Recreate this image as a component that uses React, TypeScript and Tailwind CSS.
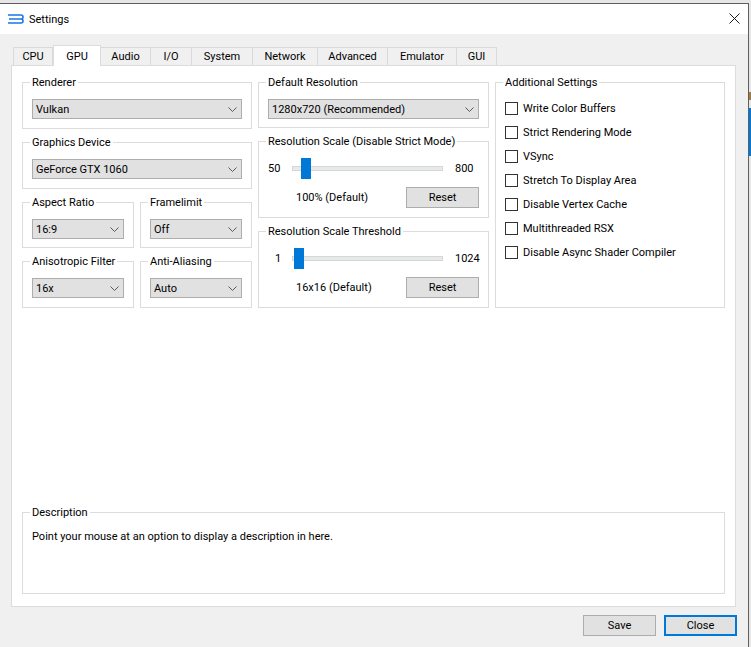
function Group({ title, className, children }: { title: string; className: string; children?: React.ReactNode }) {
  return (
    <div className={`relative border border-[#dcdcdc] ${className}`}>
      <span className="absolute left-[7px] top-[-8px] bg-white px-[2px] leading-[16px] text-black">{title}</span>
      {children}
    </div>
  );
}

function Combo({ value }: { value: string }) {
  return (
    <div className="flex h-[20px] items-center justify-between border border-[#adadad] bg-[#e1e1e1] pl-[3px] pr-[4px] text-black">
      <span className="pt-[2px]">{value}</span>
      <svg width="9" height="5" viewBox="0 0 9 5" fill="none" stroke="#5a5a5a" strokeWidth="1">
        <path d="M0.5 0.5 L4.5 4.5 L8.5 0.5" />
      </svg>
    </div>
  );
}

function ComboGroup({ title, value, className }: { title: string; value: string; className: string }) {
  return (
    <Group title={title} className={className}>
      <div className="px-[9px] pt-[16px]">
        <Combo value={value} />
      </div>
    </Group>
  );
}

function Button({ label, className }: { label: string; className: string }) {
  return <div className={`flex h-[21px] w-[73px] items-center justify-center bg-[#e1e1e1] pt-[2px] text-black ${className}`}>{label}</div>;
}

function Slider({ min, max, left, note, minClass }: { min: string; max: string; left: string; note: string; minClass: string }) {
  return (
    <>
      <div className="flex h-[21px] items-center text-black">
        <span className={`w-[24px] shrink-0 pt-[2px] ${minClass}`}>{min}</span>
        <div className="relative h-[5px] w-[151px] shrink-0 border border-[#d6d6d6] bg-[#e7eaea]">
          <div className={`absolute top-[-9px] h-[21px] w-[10px] bg-[#0078d7] ${left}`} />
        </div>
        <span className="ml-[12px] pt-[2px]">{max}</span>
      </div>
      <div className="mt-[8px] flex items-center justify-between pl-[28px] text-black">
        <span className="pt-[2px]">{note}</span>
        <Button label="Reset" className="border border-[#adadad]" />
      </div>
    </>
  );
}

const tabs = ["CPU", "GPU", "Audio", "I/O", "System", "Network", "Advanced", "Emulator", "GUI"];
const tabWidths = [40, 48, 50, 41, 61, 65, 70, 69, 40];

const checks = [
  "Write Color Buffers",
  "Strict Rendering Mode",
  "VSync",
  "Stretch To Display Area",
  "Disable Vertex Cache",
  "Multithreaded RSX",
  "Disable Async Shader Compiler",
];

export default function App() {
  return (
    <div className="relative h-[647px] w-[751px] overflow-hidden bg-[#e6e6e6] pt-[3px] font-['Roboto',sans-serif] text-[11px]">
      {/* desktop behind the window */}
      <div className="absolute right-0 top-[108px] h-[48px] w-[2px] bg-[#0078d7]" />
      <div className="absolute right-0 top-[92px] h-[8px] w-[2px] bg-[#a07a4a]" />
      <div className="relative flex h-[644px] w-[749px] flex-col border-r border-t border-[#5f5f5f] bg-[#f0f0f0]">
        {/* title bar */}
        <div className="flex h-[30px] items-center bg-white pl-[8px] pr-[8px]">
          <svg className="mt-[-1px]" width="16" height="10" viewBox="0 0 16 10" fill="none" stroke="#1976e8" strokeWidth="1.6">
            <path d="M0 1 H13 Q15 1 15 3 Q15 5 13 5 H1 M13 5 Q15 5 15 7 Q15 9 13 9 H0" />
          </svg>
          <span className="ml-[5px] pt-[2px] text-black">Settings</span>
          <svg className="ml-auto mt-[-2px]" width="11" height="11" viewBox="0 0 11 11" stroke="#1a1a1a" strokeWidth="1" fill="none">
            <path d="M0.5 0.5 L10.5 10.5 M10.5 0.5 L0.5 10.5" />
          </svg>
        </div>
        <div className="px-[11px] pt-[11px]">
          {/* tab strip */}
          <div className="relative z-10 mb-[-1px] flex h-[21px] items-end pl-[2px] text-black">
            {tabs.map((t, i) => (
              <div
                key={t}
                className={
                  t === "GPU"
                    ? "flex h-[21px] items-start justify-center border border-b-0 border-[#dcdcdc] bg-white pt-[3px]"
                    : "mb-[1px] flex h-[18px] items-center justify-center border-r border-t border-[#d9d9d9] bg-[#f0f0f0] pt-[2px] first:border-l"
                }
                style={{ width: tabWidths[i] }}
              >
                {t}
              </div>
            ))}
          </div>
          {/* page */}
          <div className="flex h-[542px] w-[725px] flex-col border border-[#dcdcdc] bg-white px-[10px] pb-[12px] pt-[16px]">
            <div className="flex gap-[6px]">
              <div className="flex w-[230px] flex-col gap-[13px]">
                <ComboGroup title="Renderer" value="Vulkan" className="h-[47px]" />
                <ComboGroup title="Graphics Device" value="GeForce GTX 1060" className="h-[47px]" />
                <div className="flex gap-[6px]">
                  <ComboGroup title="Aspect Ratio" value="16:9" className="h-[46px] w-[112px]" />
                  <ComboGroup title="Framelimit" value="Off" className="h-[46px] w-[112px]" />
                </div>
                <div className="flex gap-[6px]">
                  <ComboGroup title="Anisotropic Filter" value="16x" className="h-[47px] w-[112px]" />
                  <ComboGroup title="Anti-Aliasing" value="Auto" className="h-[47px] w-[112px]" />
                </div>
              </div>
              <div className="flex w-[231px] flex-col gap-[13px]">
                <ComboGroup title="Default Resolution" value="1280x720 (Recommended)" className="h-[46px]" />
                <Group title="Resolution Scale (Disable Strict Mode)" className="h-[77px] px-[9px] pt-[16px]">
                  <Slider min="50" max="800" left="left-[8px]" note="100% (Default)" minClass="" />
                </Group>
                <Group title="Resolution Scale Threshold" className="h-[77px] px-[9px] pt-[16px]">
                  <Slider min="1" max="1024" left="left-[1px]" note="16x16 (Default)" minClass="pl-[7px]" />
                </Group>
              </div>
              <Group title="Additional Settings" className="h-[226px] w-[230px] pl-[9px] pt-[17px]">
                <div className="flex flex-col gap-[8px]">
                  {checks.map((c) => (
                    <div key={c} className="flex h-[16px] items-center text-black">
                      <div className="mr-[5px] h-[13px] w-[13px] border border-[#333333] bg-white" />
                      <span className="pt-[2px]">{c}</span>
                    </div>
                  ))}
                </div>
              </Group>
            </div>
            <Group title="Description" className="mt-auto h-[82px] w-[703px] pl-[9px] pt-[15px]">
              <span className="leading-[17px] text-black">Point your mouse at an option to display a description in here.</span>
            </Group>
          </div>
        </div>
        {/* footer buttons */}
        <div className="flex justify-end gap-[8px] pr-[11px] pt-[8px]">
          <Button label="Save" className="border border-[#adadad]" />
          <Button label="Close" className="border-2 border-[#0078d7]" />
        </div>
      </div>
    </div>
  );
}
